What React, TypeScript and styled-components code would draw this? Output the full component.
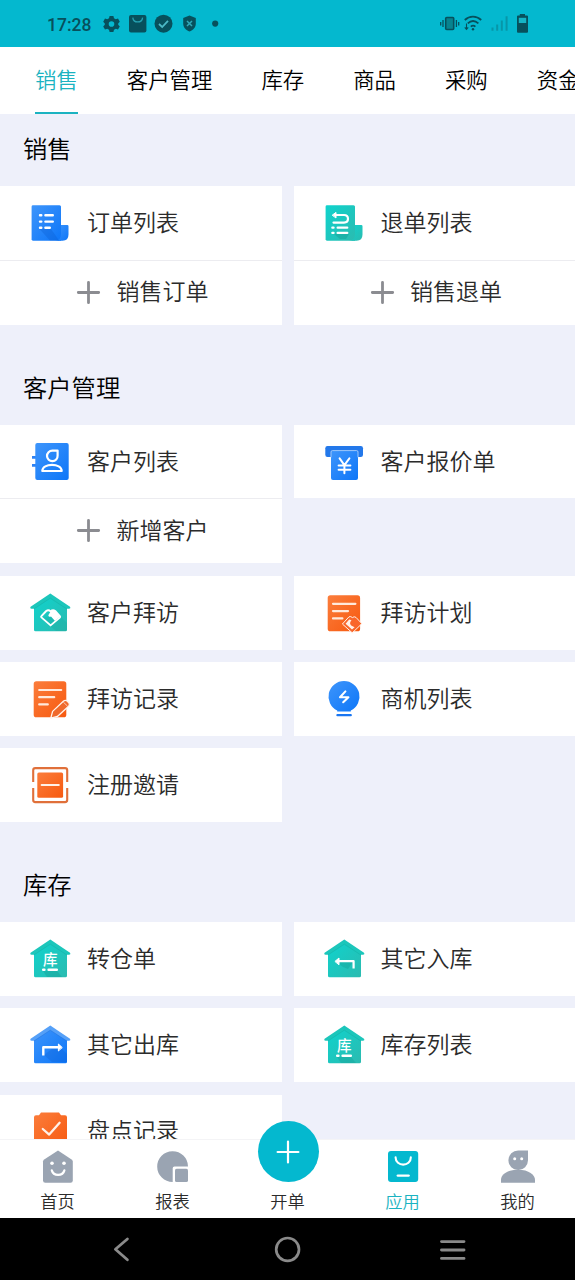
import { ReactNode } from 'react'
import styled, { createGlobalStyle, css } from 'styled-components'

const TEAL = '#04b8cf'
const PAGE_BG = '#eef0fa'

const GlobalStyle = createGlobalStyle`
  * {
    box-sizing: border-box;
  }
  body {
    margin: 0;
    background: ${PAGE_BG};
    font-family: 'Noto Sans CJK SC', 'Noto Sans', sans-serif;
    font-weight: 350;
  }
  svg {
    display: block;
    flex: none;
  }
`

const Screen = styled.div`
  display: flex;
  flex-direction: column;
  width: 575px;
  height: 1280px;
  overflow: hidden;
`

const StatusBar = styled.header`
  display: flex;
  flex: none;
  align-items: center;
  justify-content: space-between;
  height: 47px;
  padding: 0 46px 0 47px;
  background: ${TEAL};
  color: #07505c;
`

const StatusGroup = styled.div<{ $gap: number }>`
  display: flex;
  align-items: center;
  gap: ${({ $gap }) => $gap}px;
`

const Clock = styled.span`
  width: 48px;
  font: 500 17.5px/24px Roboto, sans-serif;
  transform: translateY(1px);
`

const Tabs = styled.nav`
  display: flex;
  flex: none;
  gap: 49px;
  height: 67px;
  padding-left: 35px;
  background: #fff;
  overflow: hidden;
`

const Tab = styled.button<{ $active?: boolean }>`
  flex: none;
  height: 67px;
  padding: 0 0 2px;
  border: 0;
  border-bottom: 2px solid transparent;
  background: none;
  color: #000;
  font: 350 21.4px/61px 'Noto Sans CJK SC', sans-serif;
  white-space: nowrap;
  ${({ $active }) =>
    $active &&
    css`
      color: #1bb3c1;
      border-color: #1bb3c1;
    `}
`

const Content = styled.main`
  flex: 1;
  min-height: 0;
  overflow: hidden;
`

const Section = styled.section`
  margin-bottom: 28.2px;
`

const SectionTitle = styled.h2`
  height: 72px;
  margin: 0;
  padding-left: 23px;
  color: #000;
  font-size: 24.3px;
  font-weight: 350;
  line-height: 68px;
`

const Grid = styled.div`
  display: grid;
  grid-template-columns: 1fr 1fr;
  align-items: start;
  gap: 12.6px 12px;
`

const Card = styled.div`
  background: #fff;
  color: #2b2b2b;
  font-size: 23px;
`

const CardMain = styled.div`
  display: flex;
  align-items: center;
  gap: 15px;
  height: 73.6px;
  padding-left: 28px;
`

const CardAdd = styled.div`
  display: flex;
  align-items: center;
  gap: 15.5px;
  height: 65px;
  padding: 0 0 1px 76px;
  border-top: 1px solid #ececf0;
`

const Label = styled.span`
  line-height: 30px;
  transform: translateY(-1.6px);
`

const BottomBar = styled.nav`
  display: grid;
  flex: none;
  grid-template-rows: 78px;
  grid-template-columns: repeat(5, 1fr);
  height: 79px;
  border-top: 1px solid #f4f4f6;
  background: #fff;
`

const BottomItem = styled.div<{ $active?: boolean }>`
  display: flex;
  flex-direction: column;
  align-items: center;
  justify-content: flex-end;
  gap: 4px;
  padding-bottom: 5px;
  color: ${({ $active }) => ($active ? '#1bb3c1' : '#2b2b2b')};
  font-size: 17.3px;
  line-height: 24px;
`

const CreateButton = styled.div`
  display: flex;
  flex: none;
  align-items: center;
  justify-content: center;
  width: 61px;
  height: 61px;
  margin: 0 0 3px 1px;
  border-radius: 50%;
  background: ${TEAL};
`

const SystemNav = styled.footer`
  display: flex;
  flex: none;
  align-items: center;
  gap: 138px;
  height: 62px;
  padding-left: 107px;
  background: #000;
`

function Gradients() {
  return (
    <svg width="0" height="0" style={{ position: 'absolute' }}>
      <defs>
        <linearGradient id="blue" x1="0" y1="0" x2="1" y2="1">
          <stop offset="0" stopColor="#3e95fb" />
          <stop offset="1" stopColor="#0d76f8" />
        </linearGradient>
        <linearGradient id="teal" x1="0" y1="0" x2="1" y2="1">
          <stop offset="0" stopColor="#0fd3cd" />
          <stop offset="1" stopColor="#2bbbb0" />
        </linearGradient>
        <linearGradient id="orange" x1="0" y1="0" x2="1" y2="1">
          <stop offset="0" stopColor="#fb7d3c" />
          <stop offset="1" stopColor="#f7590f" />
        </linearGradient>
      </defs>
    </svg>
  )
}

const Glyph = ({ children }: { children: ReactNode }) => (
  <svg width="44" height="44" viewBox="0 0 44 44" fill="none" strokeLinecap="round" strokeLinejoin="round">
    {children}
  </svg>
)

const Sheet = ({ tone, children }: { tone: string; children: ReactNode }) => (
  <Glyph>
    <path d="M5 4.3H31.5Q33 4.3 33 5.8V39.7H5Q3.6 39.7 3.6 38.3V5.7Q3.6 4.3 5 4.3Z" fill={`url(#${tone})`} />
    <path d="M33 24H39.3Q40.5 24 40.5 25.2V33.5Q40.5 39.7 34.5 39.7H27Q33 39.7 33 33Z" fill={`url(#${tone})`} />
    {children}
  </Glyph>
)

const House = ({ tone, children }: { tone: string; children: ReactNode }) => (
  <Glyph>
    <path d="M6 14.5L22.3 5.5L39 14.5V38.8Q39 40.3 37.5 40.3H7.5Q6 40.3 6 38.8Z" fill={`url(#${tone})`} />
    <path
      d="M22.3 2.4L42 15.8Q43 17.6 41 17.8H38.6L22.3 7.2L6.2 17.8H3.6Q1.6 17.6 2.6 15.8Z"
      fill={tone === 'blue' ? '#55a0f8' : '#1cc6bb'}
    />
    <path d="M6.2 17.8L22.3 7.2L38.6 17.8" stroke={tone === 'blue' ? '#1463cf' : '#0fa79d'} strokeWidth=".6" opacity=".6" />
    {children}
  </Glyph>
)

const StockHouse = () => (
  <House tone="teal">
    <path d="M15 34L29 34L34 40H19Z" fill="#109b92" opacity=".35" />
    <text x="22.4" y="28.2" textAnchor="middle" fontSize="14.6" fontWeight="500" fill="#fff">
      库
    </text>
    <path d="M15.2 32.8H16.4M20.6 32.8H28.8" stroke="#fff" strokeWidth="2.5" />
  </House>
)

const icons: Record<string, ReactNode> = {
  order: (
    <Sheet tone="blue">
      <path d="M11 27.5L23 28L31 39.5H22Z" fill="#0b58c9" opacity=".3" />
      <path d="M12 14.3H13.3M17.4 14.3H24.8M12 20.6H13.3M17.4 20.6H24.8M12 26.7H13.3M17.4 26.7H21.8" stroke="#fff" strokeWidth="2.4" />
    </Sheet>
  ),
  refund: (
    <Sheet tone="teal">
      <path d="M12 33H27L24 38H18Z" fill="#109b92" opacity=".4" />
      <path d="M13 14H22C27.3 14 27.3 21.6 22 21.6H11.5" stroke="#fff" strokeWidth="2.2" />
      <path d="M10.5 14L14 11.4V16.6Z" fill="#fff" stroke="#fff" strokeWidth="1" />
      <path d="M10.3 26.7H11.6M15.6 26.7H25.3M10.3 31.9H11.6M15.6 31.9H25.3" stroke="#fff" strokeWidth="2.2" />
    </Sheet>
  ),
  customers: (
    <Glyph>
      <path d="M4 16H8V18.7H4ZM4 24H8V26.7H4Z" fill="#2d83f5" />
      <rect x="7.3" y="3" width="33.4" height="37" rx="2" fill="url(#blue)" />
      <path d="M24.3 10.6H29.6V15.6A5.3 5.3 0 1 1 24.3 10.6Z" stroke="#fff" strokeWidth="2.2" />
      <path d="M14.3 31C14.3 22.8 33.7 22.8 33.7 31Z" stroke="#fff" strokeWidth="2.2" />
    </Glyph>
  ),
  quote: (
    <Glyph>
      <rect x="3.3" y="6" width="37.7" height="11" rx="2.2" fill="#2378ea" />
      <rect x="9" y="10.6" width="27" height="29.4" rx="2" fill="url(#blue)" />
      <path d="M9 17V12Q9 10.6 10.4 10.6H34.6Q36 10.6 36 12V17" stroke="#a9cffc" strokeWidth=".9" />
      <path d="M17.6 18.4L22.4 25.2L27.4 18.4M22.4 25.2V33.2M16.6 25.4H28.4M16.6 29.8H28.4" stroke="#fff" strokeWidth="2" />
    </Glyph>
  ),
  visit: (
    <House tone="teal">
      <path d="M13 27L23 35.5L28 40H38Q39 40 39 38V32L32 25Z" fill="#109b92" opacity=".2" />
      <path
        d="M22.6 34.4L13.4 26.4Q12.8 25.8 13.4 25.2L18.2 20Q20.5 18.4 22.6 20.4Q24.8 18.4 27.2 20L32 25.4Q32.4 26 31.8 26.6Z"
        stroke="#fff"
        strokeWidth="1.9"
      />
      <path d="M22.6 20.6L20.3 24.3Q20.8 26.4 23 25.6L26.8 29.8L31.8 26L27 20Q24.5 18.8 22.6 20.6Z" fill="#fff" />
    </House>
  ),
  plan: (
    <Glyph>
      <rect x="5.7" y="4.3" width="32.4" height="36" rx="2.6" fill="url(#orange)" />
      <path d="M11 12.8H33.4M11 20.1H26M11 27.4H20.4" stroke="#ffe9dc" strokeWidth="2.2" />
      <path d="M30 41.6L20.4 33L27 25.8Q28.8 25 30.4 26.6Q32.2 25 34 26.4L39.6 32.4Z" fill="#f9662a" stroke="#fff1e8" strokeWidth="1" />
      <path d="M29.5 29.2L27.2 28.4L23.6 32.8L30 38.4L32.6 36.2L29.2 34.4Q26.8 32 29.5 29.2Z" fill="#fff1e8" />
    </Glyph>
  ),
  record: (
    <Glyph>
      <rect x="5.7" y="4.3" width="32.6" height="36" rx="2.6" fill="url(#orange)" />
      <path d="M11.2 13H33.2M11.2 20.2H26.2M11.2 27.4H19.8" stroke="#ffe9dc" strokeWidth="2.2" />
      <path d="M22.8 41.2L24.6 34.4L35.6 24Q37.4 22.6 39.4 24.2L41 26Q42 27.8 40.6 29.2L29.4 39.4Z" fill="#f0692b" stroke="#fff4ec" strokeWidth="1.3" />
      <path d="M35.6 25.4L39.2 28.8" stroke="#fff4ec" strokeWidth=".7" />
    </Glyph>
  ),
  leads: (
    <Glyph>
      <path d="M22 4A15.6 15.6 0 0 1 28.8 33.6V34.6H15.2V33.6A15.6 15.6 0 0 1 22 4Z" fill="url(#blue)" />
      <path d="M15.4 38.2H28.8" stroke="#1976f2" strokeWidth="2.2" />
      <path d="M23.4 14.4L18 20.2H26.4L21.2 25.2" stroke="#fff" strokeWidth="2.1" />
    </Glyph>
  ),
  invite: (
    <Glyph>
      <path d="M5.2 19V7.2Q5.2 5.1 7.3 5.1H37Q39.2 5.1 39.2 7.2V19M5.2 25V37Q5.2 39.1 7.3 39.1H37Q39.2 39.1 39.2 37V25" stroke="#e0703a" strokeWidth="2.1" strokeLinecap="butt" />
      <rect x="9.3" y="9.5" width="25.8" height="25.3" rx="1.6" fill="url(#orange)" />
      <path d="M13.6 22.1H30.8" stroke="#fff1e8" strokeWidth="2" />
    </Glyph>
  ),
  stock: <StockHouse />,
  inbound: (
    <House tone="teal">
      <path d="M14 25H31L26 32L21 30Z" fill="#109b92" opacity=".35" />
      <path d="M15.5 24.2H31.6V31.4" stroke="#fff" strokeWidth="2.2" strokeLinecap="butt" />
      <path d="M13.2 24.2L17 21V27.4Z" fill="#fff" stroke="#fff" strokeWidth="1" />
    </House>
  ),
  outbound: (
    <House tone="blue">
      <path d="M16 32L24 26H34L39 31V39H24Z" fill="#0b58c9" opacity=".25" />
      <path d="M15.3 32.4V24.3H31" stroke="#fff" strokeWidth="2.4" strokeLinecap="butt" />
      <path d="M34 24.3L30.4 21V27.6Z" fill="#fff" stroke="#fff" strokeWidth="1" />
    </House>
  ),
  check: (
    <Glyph>
      <path d="M8 6.3H11L13 3.6H31L33 6.3H37Q39 6.3 39 8.3V38H6V8.3Q6 6.3 8 6.3Z" fill="url(#orange)" />
      <path d="M14.8 20L21.2 25.6L31.6 13.8" stroke="#fff1e8" strokeWidth="2.3" />
    </Glyph>
  ),
}

type Entry = { label: string; icon: string; add?: string }

const sections: { title: string; entries: Entry[] }[] = [
  {
    title: '销售',
    entries: [
      { label: '订单列表', icon: 'order', add: '销售订单' },
      { label: '退单列表', icon: 'refund', add: '销售退单' },
    ],
  },
  {
    title: '客户管理',
    entries: [
      { label: '客户列表', icon: 'customers', add: '新增客户' },
      { label: '客户报价单', icon: 'quote' },
      { label: '客户拜访', icon: 'visit' },
      { label: '拜访计划', icon: 'plan' },
      { label: '拜访记录', icon: 'record' },
      { label: '商机列表', icon: 'leads' },
      { label: '注册邀请', icon: 'invite' },
    ],
  },
  {
    title: '库存',
    entries: [
      { label: '转仓单', icon: 'stock' },
      { label: '其它入库', icon: 'inbound' },
      { label: '其它出库', icon: 'outbound' },
      { label: '库存列表', icon: 'stock' },
      { label: '盘点记录', icon: 'check' },
    ],
  },
]

const tabs = ['销售', '客户管理', '库存', '商品', '采购', '资金']

function EntryCard({ label, icon, add }: Entry) {
  return (
    <Card>
      <CardMain>
        {icons[icon]}
        <Label>{label}</Label>
      </CardMain>
      {add && (
        <CardAdd>
          <svg width="25" height="25" viewBox="0 0 25 25" fill="none" stroke="#8b8c91" strokeWidth="2.8" strokeLinecap="round">
            <path d="M2.3 12.5H22.7M12.5 2.3V22.7" />
          </svg>
          <Label>{add}</Label>
        </CardAdd>
      )}
    </Card>
  )
}

function StatusIcons() {
  return (
    <>
      <StatusGroup $gap={8}>
        <Clock>17:28</Clock>
        <svg width="156" height="20" viewBox="103 14 156 20" fill="#07505c">
          <path
            fillRule="evenodd"
            d="M109.6 16H113.4L114 18.2L115.8 19.2L118 18.6L119.8 21.8L118.2 23.4V24.8L119.8 26.4L118 29.4L115.8 28.8L114 29.8L113.4 32H109.6L109 29.8L107.2 28.8L105 29.4L103.2 26.4L104.8 24.8V23.4L103.2 21.8L105 18.6L107.2 19.2L109 18.2ZM111.5 21.2A2.8 2.8 0 1 0 111.5 26.8A2.8 2.8 0 1 0 111.5 21.2Z"
          />
          <rect x="129" y="15" width="17.4" height="17.6" rx="2" />
          <path d="M132.8 17.6C133.4 23.4 142 23.4 142.6 17.6" fill="none" stroke="#26a1b1" strokeWidth="1.3" />
          <circle cx="163.5" cy="23.7" r="9" />
          <path d="M159 24L162.2 27L168 20.8" fill="none" stroke="#4cb9c6" strokeWidth="1.8" />
          <path d="M189.5 15.6L195.8 18V23.5C195.8 27.6 193 30.3 189.5 31.4C186 30.3 183.2 27.6 183.2 23.5V18Z" />
          <path d="M187 21L192 26M192 21L187 26" fill="none" stroke="#2fa9b8" strokeWidth="1.5" />
          <circle cx="215.2" cy="23.6" r="3.1" />
        </svg>
      </StatusGroup>
      <svg width="90" height="20" viewBox="439 14 90 20" fill="none" stroke="#07505c">
        <rect x="445.7" y="17.5" width="8" height="12" rx="1" strokeWidth="1.6" fill="#07838f" />
        <path d="M443 20V27M440.7 22V25.4M456.4 20V27M458.7 22V25.4" strokeWidth="1.3" />
        <path d="M464.8 20C469.5 15.4 476.4 15.4 481.2 20M467.8 23.4C471 20.4 475 20.4 478.4 23.4M470.8 26.6C472.2 25.4 474 25.4 475.4 26.6" strokeWidth="1.8" />
        <circle cx="473" cy="29.2" r="1.2" fill="#07505c" stroke="none" />
        <path d="M466.5 23.5V29M464.8 27.4L466.5 29.4L468.2 27.4" strokeWidth="1.1" />
        <path d="M492.5 27.5V30.8M497.2 24.4V30.8M501.8 20.6V30.8M506.6 16.2V30.8" stroke="#0796a8" strokeWidth="2" />
        <path d="M519.8 14H525V15.6H527Q528 15.6 528 16.6V31.8Q528 32.8 527 32.8H518Q517 32.8 517 31.8V16.6Q517 15.6 518 15.6H519.8Z" fill="#07505c" stroke="none" />
        <rect x="518.8" y="17.8" width="7.4" height="5.2" fill="#16b4c5" stroke="none" />
      </svg>
    </>
  )
}

const TabGlyph = ({ children }: { children: ReactNode }) => (
  <svg width="36" height="36" viewBox="0 0 36 36" fill="none" strokeLinecap="round">
    {children}
  </svg>
)

export default function App() {
  return (
    <Screen>
      <GlobalStyle />
      <Gradients />
      <StatusBar>
        <StatusIcons />
      </StatusBar>
      <Tabs>
        {tabs.map((tab, i) => (
          <Tab key={tab} $active={i === 0}>
            {tab}
          </Tab>
        ))}
      </Tabs>
      <Content>
        {sections.map(({ title, entries }) => (
          <Section key={title}>
            <SectionTitle>{title}</SectionTitle>
            <Grid>
              {entries.map((entry) => (
                <EntryCard key={entry.label} {...entry} />
              ))}
            </Grid>
          </Section>
        ))}
      </Content>
      <BottomBar>
        <BottomItem>
          <TabGlyph>
            <path d="M18 1.6L31.6 10.4Q32.8 11.2 32.8 12.6V31.4Q32.8 33.7 30.5 33.7H5.3Q3 33.7 3 31.4V12.6Q3 11.2 4.2 10.4Z" fill="#9aa4b2" />
            <circle cx="12" cy="14.2" r="1.8" fill="#fff" />
            <circle cx="24" cy="14.2" r="1.8" fill="#fff" />
            <path d="M11.8 21.4C13.4 27.4 22.8 27.4 24.4 21.4" stroke="#fff" strokeWidth="2.2" />
          </TabGlyph>
          首页
        </BottomItem>
        <BottomItem>
          <TabGlyph>
            <path d="M17.7 33A15.4 15.4 0 1 1 33 17.4H19.5Q17.7 17.4 17.7 19.2Z" fill="#9aa4b2" />
            <rect x="20" y="19.8" width="13" height="13.2" rx="1.6" fill="#9aa4b2" />
          </TabGlyph>
          报表
        </BottomItem>
        <BottomItem>
          <CreateButton>
            <svg width="24" height="24" viewBox="0 0 24 24" stroke="#fff" strokeWidth="2.2" strokeLinecap="round">
              <path d="M1.6 12H22.4M12 1.6V22.4" />
            </svg>
          </CreateButton>
          开单
        </BottomItem>
        <BottomItem $active>
          <TabGlyph>
            <rect x="3" y="2" width="30.2" height="31" rx="3" fill={TEAL} />
            <path d="M10.6 8.4C10.6 18 25.8 18 25.8 8.4" stroke="#fff" strokeWidth="2.1" />
            <path d="M12.8 26.6H23.6" stroke="#fff" strokeWidth="2.4" />
          </TabGlyph>
          应用
        </BottomItem>
        <BottomItem>
          <TabGlyph>
            <path d="M18.2 1.4H28V11.2A9.8 9.8 0 1 1 18.2 1.4Z" fill="#9aa4b2" />
            <path d="M1 33.7V31C1 25.4 7 21 18 20.4C29 21 35 25.4 35 31V33.7Z" fill="#9aa4b2" />
            <circle cx="14.7" cy="9.7" r="1.5" fill="#fff" />
            <circle cx="21.7" cy="9.7" r="1.5" fill="#fff" />
          </TabGlyph>
          我的
        </BottomItem>
      </BottomBar>
      <SystemNav>
        <svg width="28" height="28" viewBox="0 0 28 28" fill="none" stroke="#8a8a8a" strokeWidth="2.8" strokeLinecap="round" strokeLinejoin="round">
          <path d="M20.4 4L8.4 14.3L20.4 24.8" />
        </svg>
        <svg width="28" height="28" viewBox="0 0 28 28" fill="none" stroke="#8a8a8a" strokeWidth="2.7">
          <circle cx="14.6" cy="14.4" r="11.4" />
        </svg>
        <svg width="28" height="28" viewBox="0 0 28 28" fill="none" stroke="#8a8a8a" strokeWidth="2.9" strokeLinecap="round">
          <path d="M2.5 6.6H25M2.5 15H25M2.5 23.4H25" />
        </svg>
      </SystemNav>
    </Screen>
  )
}
